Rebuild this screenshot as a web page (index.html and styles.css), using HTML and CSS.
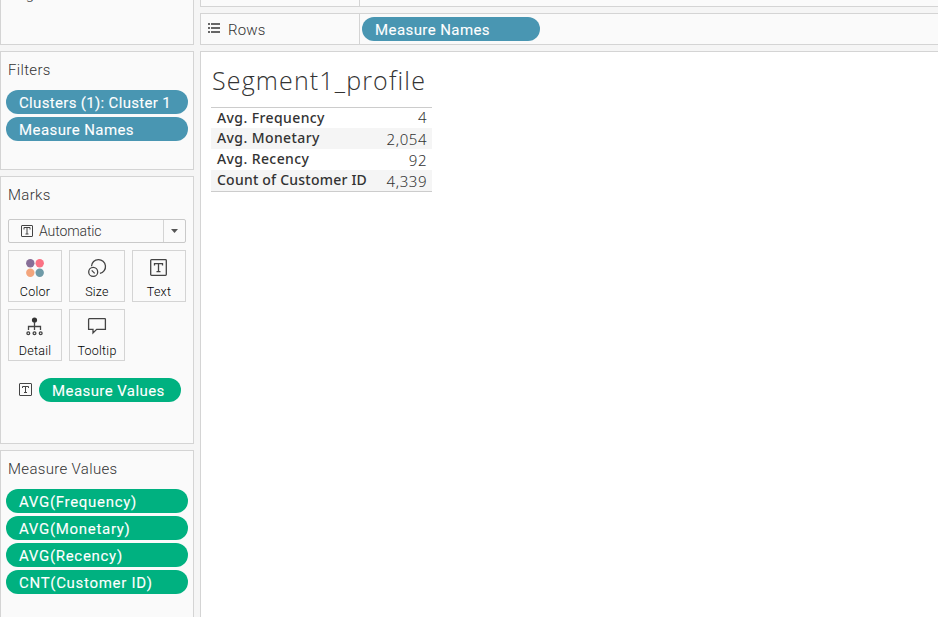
FILE: index.html
```html
<!DOCTYPE html>
<html lang="en">
<head>
<meta charset="utf-8">
<title>Segment1_profile</title>
<link rel="stylesheet" href="styles.css">
</head>
<body>
<div class="app">
  <aside class="side">
    <section class="card pages"><h2>Pages</h2></section>
    <section class="card filters">
      <h2>Filters</h2>
      <div class="pills">
        <div class="pill blue"><span class="w-cluster">Clusters (1): Cluster 1</span></div>
        <div class="pill blue"><span>Measure Names</span></div>
      </div>
    </section>
    <section class="card marks">
      <h2>Marks</h2>
      <div class="select">
        <svg class="t-icon" width="12" height="12" viewBox="0 0 12 12"><rect x=".5" y=".5" width="11" height="11" rx=".5"/><path d="M3 4.500V2.500h6v2M6 2.500v6.500M4.500 9h3"/></svg>
        <span class="select-label">Automatic</span>
        <span class="arrow"><svg width="7" height="4" viewBox="0 0 7 4"><path d="M0 0h7L3.500 4z" fill="#555"/></svg></span>
      </div>
      <div class="buttons">
        <div class="btn"><svg width="20" height="20" viewBox="0 0 20 20"><circle cx="5.300" cy="5.300" r="4.200" fill="#876e97"/><circle cx="14.700" cy="5.300" r="4.200" fill="#fb7284"/><circle cx="5.300" cy="14.700" r="4.200" fill="#f3a57c"/><circle cx="14.700" cy="14.700" r="4.200" fill="#6f9aa7"/></svg><span>Color</span></div>
        <div class="btn"><svg class="line" width="20" height="20" viewBox="0 0 20 20"><path d="M4.500 8.200a7 7 0 1 1 8.400 7.200"/><circle cx="6.200" cy="13.900" r="4.500"/><path d="M4.700 12.400l3 3"/></svg><span>Size</span></div>
        <div class="btn"><svg class="line" width="20" height="20" viewBox="0 0 20 20"><rect x="1.700" y="1.700" width="15.600" height="15.600" rx=".8"/><path d="M5.500 7.500V5.700h8v1.800M9.500 5.700v8M7.500 13.700h4"/></svg><span>Text</span></div>
        <div class="btn"><svg class="line" width="20" height="20" viewBox="0 0 20 20"><circle cx="9.500" cy="3" r="2.600" fill="#333" stroke="none"/><path d="M9.500 5v8M3.500 13V9.500h12V13"/><circle cx="3.300" cy="16.200" r="1.400"/><circle cx="9.500" cy="16.200" r="1.400"/><circle cx="15.700" cy="16.200" r="1.400"/></svg><span>Detail</span></div>
        <div class="btn"><svg class="line" width="20" height="20" viewBox="0 0 20 20"><path d="M2.200 1.700h15.600a.6.6 0 0 1 .6.6v10H9.700L6 16v-3.700H1.600v-10a.6.6 0 0 1 .6-.6z"/></svg><span>Tooltip</span></div>
      </div>
      <div class="encoding">
        <svg class="t-icon" width="13" height="13" viewBox="0 0 13 13"><rect x=".5" y=".5" width="12" height="12" rx=".5"/><path d="M3.500 5V3.500h6V5M6.500 3.500v6M5 9.500h3"/></svg>
        <div class="pill green"><span>Measure Values</span></div>
      </div>
    </section>
    <section class="card values">
      <h2>Measure Values</h2>
      <div class="pills wide">
        <div class="pill green"><span>AVG(Frequency)</span></div>
        <div class="pill green"><span>AVG(Monetary)</span></div>
        <div class="pill green"><span>AVG(Recency)</span></div>
        <div class="pill green"><span>CNT(Customer ID)</span></div>
      </div>
    </section>
  </aside>
  <main class="main">
    <div class="shelf columns"><div class="shelf-name"></div></div>
    <div class="shelf rows">
      <div class="shelf-name"><svg width="12" height="10" viewBox="0 0 12 10" fill="#666"><path d="M0 0h2v2H0zM3 0h9v2H3zM0 4h2v2H0zM3 4h9v2H3zM0 8h2v2H0zM3 8h9v2H3z"/></svg><span>Rows</span></div>
      <div class="pill blue"><span>Measure Names</span></div>
    </div>
    <section class="view">
      <h1>Segment1_profile</h1>
      <table>
        <tr><th>Avg. Frequency</th><td>4</td></tr>
        <tr><th>Avg. Monetary</th><td>2,054</td></tr>
        <tr><th>Avg. Recency</th><td>92</td></tr>
        <tr><th class="tight">Count of Customer ID</th><td>4,339</td></tr>
      </table>
    </section>
  </main>
</div>
</body>
</html>
```
FILE: styles.css
```css
* { box-sizing: border-box; }
body { margin: 0; background: #f5f5f5; font-family: Roboto, "Liberation Sans", sans-serif; color: #333; overflow: hidden; }
.app { display: flex; gap: 6px; width: 938px; height: 617px; overflow: hidden; }
.side { width: 194px; flex: none; display: flex; flex-direction: column; gap: 6px; }
.card { flex: none; background: #fafafa; border: 1px solid #d4d4d4; }
.card h2 { margin: 0 0 0 7px; font-size: 15px; line-height: 18px; font-weight: 300; letter-spacing: .33px; }
.pages { height: 45px; border-top: 0; overflow: hidden; }
.card.pages h2 { margin-top: -15px; }
.filters { height: 119px; padding-top: 9px; }
.marks { height: 268px; padding-top: 9px; }
.values { height: 180px; padding-top: 9px; }
.pills { display: flex; flex-direction: column; gap: 3px; margin: 11px 5px 0; }
.pill { height: 24px; border-radius: 12px; padding-left: 13px; color: #fff; font-size: 15px; line-height: 26px; font-weight: 400; -webkit-text-stroke: .1px #fff; letter-spacing: .42px; white-space: nowrap; }
.pill .w-cluster { letter-spacing: .33px; }
.wide .pill { letter-spacing: .7px; }
.blue { background: #4996b2; }
.green { background: #00b180; }
.select { display: flex; align-items: center; width: 178px; height: 24px; margin: 15px 0 0 7px; border: 1px solid #c9c9c9; border-radius: 2px; padding-left: 12px; }
.select-label { flex: 1; margin-left: 6px; font-size: 14px; line-height: 16px; font-weight: 300; letter-spacing: -.1px; }
.arrow { display: flex; align-items: center; justify-content: center; width: 22px; height: 22px; border-left: 1px solid #d4d4d4; }
.t-icon { fill: none; stroke: #444; stroke-width: 1; flex: none; }
.buttons { display: grid; grid-template-columns: 54px 56px 54px; gap: 7px; margin: 7px 0 0 7px; }
.btn { height: 52px; border: 1px solid #d4d4d4; display: flex; flex-direction: column; align-items: center; padding-top: 7px; font-size: 12.5px; line-height: 14px; font-weight: 300; color: #000; }
.btn span { margin-top: 7px; letter-spacing: .25px; }
.line { fill: none; stroke: #444; stroke-width: 1.3; }
.encoding { display: flex; align-items: center; gap: 7px; margin: 17px 0 0 18px; }
.encoding svg { margin-top: -1px; }
.encoding .pill { width: 142px; }
.main { flex: 1; min-width: 0; display: flex; flex-direction: column; gap: 6px; }
.shelf { display: flex; background: #fafafa; border: 1px solid #d4d4d4; border-right: 0; }
.shelf-name { width: 159px; border-right: 1px solid #d4d4d4; display: flex; align-items: center; padding-left: 7px; gap: 8px; font-size: 15px; font-weight: 300; letter-spacing: .2px; }
.shelf-name svg { margin-top: -2px; }
.shelf-name span { padding-top: 1px; }
.columns { height: 7px; border-top: 0; }
.rows { height: 32px; }
.rows .pill { width: 178px; margin: 3px 0 0 2px; }
.view { flex: 1; background: #fff; border: 1px solid #d4d4d4; border-width: 1px 0 0 1px; padding: 12px 0 0 10px; }
.view h1 { margin: 0 0 0 1px; font-family: "Open Sans", "Noto Sans", sans-serif; font-size: 25px; line-height: 32px; font-weight: 300; letter-spacing: 1.15px; }
table { width: 221px; margin-top: 11px; border-collapse: separate; border-spacing: 0; border-top: 1px solid #ccc; border-bottom: 1px solid #ccc; font-family: "Noto Sans", sans-serif; font-size: 14px; }
tr:nth-child(even) { background: #f5f5f5; }
th, td { height: 21px; padding: 0; line-height: 20px; }
th { padding: 0 0 1px 6px; text-align: left; font-weight: 500; letter-spacing: .4px; }
th.tight { letter-spacing: .22px; }
td { padding: 1px 5px 0 0; text-align: right; color: #333; font-size: 15px; font-weight: 300; letter-spacing: .55px; }
tr:first-child th, tr:first-child td { height: 20px; line-height: 19px; }
tr:first-child td { padding: 0 5px 1px 0; }
```
